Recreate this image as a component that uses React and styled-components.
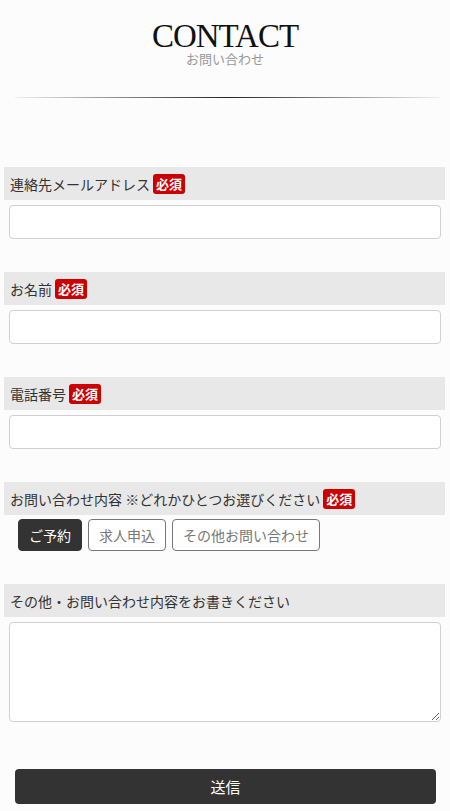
import styled, { createGlobalStyle } from 'styled-components'

const GlobalStyle = createGlobalStyle`
  body {
    margin: 0;
    background: #fcfcfc;
    font-family: "Noto Sans CJK JP", "Noto Sans", sans-serif;
    color: #333;
  }
`

const fields = [
  { label: '連絡先メールアドレス', required: true },
  { label: 'お名前', required: true },
  { label: '電話番号', required: true },
]

const choices = ['ご予約', '求人申込', 'その他お問い合わせ']

const App = () => {
  return (
    <Page>
      <GlobalStyle />
      <Header>
        <Title>CONTACT</Title>
        <Sub>お問い合わせ</Sub>
      </Header>
      <Rule />
      <Form onSubmit={(e) => e.preventDefault()}>
        {fields.map((f) => (
          <Field key={f.label}>
            <Label>
              {f.label}
              {f.required && <Badge>必須</Badge>}
            </Label>
            <Input type="text" />
          </Field>
        ))}
        <Field>
          <Label>
            お問い合わせ内容 ※どれかひとつお選びください
            <Badge>必須</Badge>
          </Label>
          <Choices>
            {choices.map((c, i) => (
              <Choice key={c} type="button" $active={i === 0}>
                {c}
              </Choice>
            ))}
          </Choices>
        </Field>
        <Field>
          <Label>その他・お問い合わせ内容をお書きください</Label>
          <TextArea />
        </Field>
        <Submit type="submit">送信</Submit>
      </Form>
    </Page>
  )
}

export default App

const Page = styled.div`
  width: 450px;
  padding-bottom: 8px;
`
const Header = styled.div`
  display: flex;
  flex-direction: column;
  align-items: center;
  padding-top: 23px;
`
const Title = styled.h1`
  margin: 0;
  font-family: "Liberation Serif", "DejaVu Serif", serif;
  font-weight: 400;
  font-size: 33px;
  line-height: 27px;
  letter-spacing: -1px;
  color: #111;
`
const Sub = styled.p`
  margin: 2px 0 0;
  font-size: 13px;
  line-height: 14px;
  color: #999;
`
const Rule = styled.div`
  height: 1px;
  margin: 31px 10px 0 15px;
  background: linear-gradient(to right, rgba(0, 0, 0, 0.05), #222 50%, rgba(0, 0, 0, 0.05));
`
const Form = styled.form`
  display: flex;
  flex-direction: column;
  gap: 33px;
  padding: 69px 5px 0 4px;
`
const Field = styled.div`
  display: flex;
  flex-direction: column;
  gap: 5px;
`
const Label = styled.div`
  display: flex;
  align-items: center;
  gap: 3px;
  height: 33px;
  padding: 0 6px;
  background: #e8e8e8;
  font-size: 14px;
  color: #333;
`
const Badge = styled.span`
  display: inline-flex;
  align-items: center;
  justify-content: center;
  height: 20px;
  padding: 0 3px;
  border-radius: 3px;
  background: #cc0000;
  color: #fff;
  font-size: 13px;
  font-weight: 700;
`
const Input = styled.input`
  box-sizing: border-box;
  height: 34px;
  margin: 0 4px 0 5px;
  border: 1px solid #cfd0d6;
  border-radius: 4px;
  background: #fff;
  font-size: 14px;
`
const TextArea = styled.textarea`
  box-sizing: border-box;
  height: 100px;
  margin: 0 4px 0 5px;
  border: 1px solid #cfd0d6;
  border-radius: 4px;
  background: #fff;
`
const Choices = styled.div`
  display: flex;
  gap: 6px;
  margin-top: -1px;
  padding-left: 14px;
`
const Choice = styled.button`
  height: 32px;
  padding: 0 10px;
  border: 1px solid ${(p) => (p.$active ? '#333' : '#777')};
  border-radius: 4px;
  background: ${(p) => (p.$active ? '#333' : '#fff')};
  color: ${(p) => (p.$active ? '#fff' : '#777')};
  font-family: inherit;
  font-size: 14px;
`
const Submit = styled.button`
  height: 35px;
  margin: 14px 9px 0 11px;
  border: none;
  border-radius: 4px;
  background: #333;
  color: #fff;
  font-family: inherit;
  font-size: 15px;
`
